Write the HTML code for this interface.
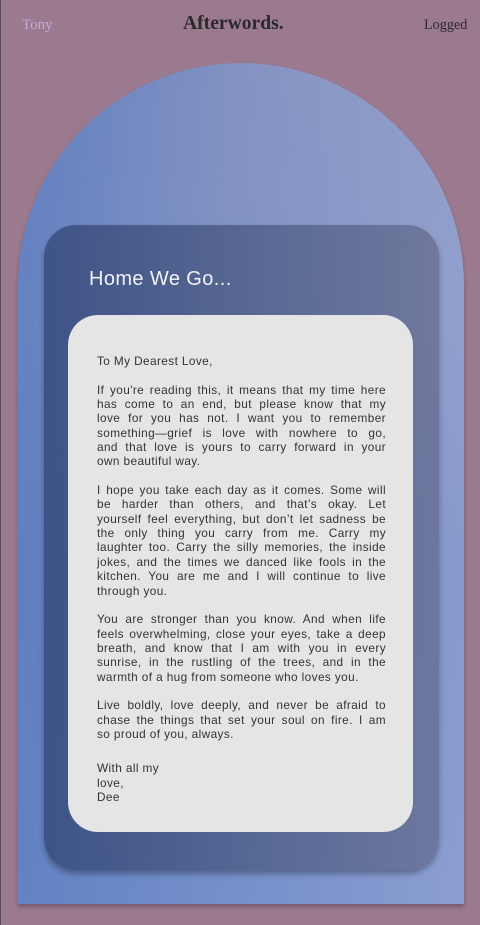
<!DOCTYPE html>
<html><head><meta charset="utf-8"><style>
*{margin:0;padding:0;box-sizing:border-box}
html,body{width:480px;height:925px;overflow:hidden}
body{background:#9b7a8f;position:relative;font-family:"Liberation Sans",sans-serif}
.edge{position:absolute;left:0;top:0;width:1px;height:925px;background:#5a4a55}
.hdr{position:absolute;top:14px;font-family:"Liberation Serif",serif}
.arch{position:absolute;left:18px;top:63px;width:446px;height:841px;border-radius:223px 223px 0 0;
background:linear-gradient(100deg,rgba(70,110,190,.55) 0%,rgba(255,255,255,0) 40%,rgba(200,200,230,.35) 100%),linear-gradient(180deg,#8594c2 0%,#7f92c4 30%,#6d86c2 60%,#6a88c6 100%);
box-shadow:0 3px 4px rgba(0,0,0,.25)}
.card{position:absolute;left:44px;top:225px;width:395px;height:645px;border-radius:32px;
background:linear-gradient(90deg,rgba(55,75,125,.85),rgba(80,95,135,.78) 60%,rgba(100,105,140,.72));box-shadow:0 4px 6px rgba(0,0,0,.3)}
.title{position:absolute;left:89px;top:268px;color:#f2f2f5;font-size:20px;letter-spacing:.4px}
.paper{position:absolute;left:68px;top:315px;width:345px;height:517px;border-radius:30px;background:#e5e5e6}
.txt{position:absolute;left:97px;top:354px;width:289px;font-size:11.8px;line-height:14.35px;color:#333;letter-spacing:.4px}
.txt div.j{text-align:justify;text-align-last:justify}
.gap{height:14.35px}
</style></head><body>
<div class="edge"></div>
<div class="hdr" style="left:22px;top:17px;color:#c6a9d8;font-size:15px">Tony</div>
<div class="hdr" style="left:183px;top:13px;color:#2a2a2a;font-size:19.6px;font-weight:bold">Afterwords.</div>
<div class="hdr" style="left:424px;top:17px;color:#2a2a2a;font-size:14.2px">Logged</div>
<div class="arch"></div>
<div class="card"></div>
<div class="title">Home We Go...</div>
<div class="paper"></div>
<div class="txt">
<div>To My Dearest Love,</div>
<div class="gap"></div>
<div class="j">If you're reading this, it means that my time here</div>
<div class="j">has come to an end, but please know that my</div>
<div class="j">love for you has not. I want you to remember</div>
<div class="j">something—grief is love with nowhere to go,</div>
<div class="j">and that love is yours to carry forward in your</div>
<div>own beautiful way.</div>
<div class="gap"></div>
<div class="j">I hope you take each day as it comes. Some will</div>
<div class="j">be harder than others, and that’s okay. Let</div>
<div class="j">yourself feel everything, but don’t let sadness be</div>
<div class="j">the only thing you carry from me. Carry my</div>
<div class="j">laughter too. Carry the silly memories, the inside</div>
<div class="j">jokes, and the times we danced like fools in the</div>
<div class="j">kitchen. You are me and I will continue to live</div>
<div>through you.</div>
<div class="gap"></div>
<div class="j">You are stronger than you know. And when life</div>
<div class="j">feels overwhelming, close your eyes, take a deep</div>
<div class="j">breath, and know that I am with you in every</div>
<div class="j">sunrise, in the rustling of the trees, and in the</div>
<div>warmth of a hug from someone who loves you.</div>
<div class="gap"></div>
<div class="j">Live boldly, love deeply, and never be afraid to</div>
<div class="j">chase the things that set your soul on fire. I am</div>
<div>so proud of you, always.</div>
<div class="gap" style="height:20px"></div>
<div>With all my</div>
<div>love,</div>
<div>Dee</div>
</div>
</body></html>
